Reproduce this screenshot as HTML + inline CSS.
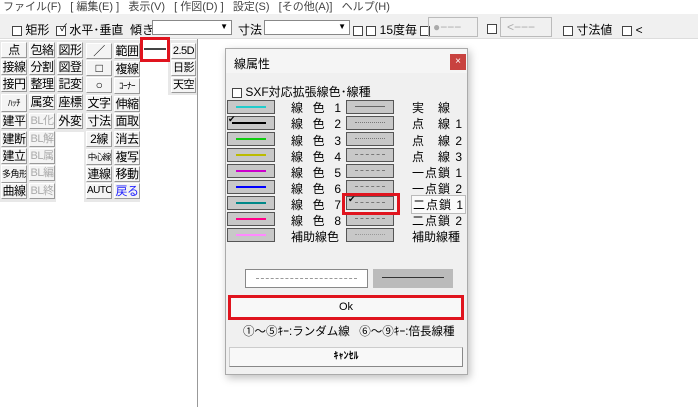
<!DOCTYPE html>
<html><head><meta charset="utf-8"><style>
*{margin:0;padding:0;box-sizing:border-box}
body{width:698px;height:407px;position:relative;background:#fff;font-family:"Liberation Sans","Noto Sans CJK JP",sans-serif;font-size:12px;color:#000;overflow:hidden}
.a{position:absolute;white-space:nowrap}
.menu{left:0;top:0;width:698px;height:14px;background:#fff;font-size:11px;color:#444;line-height:14px}
.tb{left:0;top:14px;width:698px;height:25px;background:#f0f0f0;border-bottom:1px solid #ddd}
.cb{display:inline-block;width:10px;height:10px;border:1px solid #444;background:#fff;vertical-align:middle}
.col{position:absolute;background:#e8e8e8}
.b{position:absolute;height:16px;background:#f4f4f4;border:1px solid #fff;border-right-color:#999;border-bottom-color:#999;font-size:12px;line-height:14px;text-align:center;white-space:nowrap;overflow:hidden;letter-spacing:-0.5px}
.g{color:#aaa;font-size:11px}
.dlg{left:225px;top:48px;width:243px;height:327px;background:#f0f0f0;border:1px solid #aaa;box-shadow:2px 3px 8px rgba(0,0,0,.25)}
.lb{position:absolute;width:48px;height:14px;background:#c8c8c8;border:1.5px solid #555}
.ln{position:absolute;left:8px;right:8px;top:5px;height:2px}
.lab{position:absolute;font-size:12px;letter-spacing:1px}
</style></head><body>
<div class="a menu">&nbsp;ファイル(F)&nbsp;&nbsp;&nbsp;[ 編集(E) ]&nbsp;&nbsp;&nbsp;表示(V)&nbsp;&nbsp;&nbsp;[ 作図(D) ]&nbsp;&nbsp;&nbsp;設定(S)&nbsp;&nbsp;&nbsp;[その他(A)]&nbsp;&nbsp;&nbsp;ヘルプ(H)</div>
<div class="a tb"></div>
<div class="a" style="left:12px;top:21px"><span class="cb"></span> 矩形&nbsp; <span class="cb"></span> 水平･垂直&nbsp; 傾き</div>
<div class="a" style="left:60px;top:19px;font-size:10px">✓</div>
<div class="a" style="left:152px;top:20px;width:80px;height:15px;background:#fff;border:1px solid #888"><span style="position:absolute;right:3px;top:1px;font-size:8px">▼</span></div>
<div class="a" style="left:238px;top:21px">寸法</div>
<div class="a" style="left:264px;top:20px;width:86px;height:15px;background:#fff;border:1px solid #888"><span style="position:absolute;right:3px;top:1px;font-size:8px">▼</span></div>
<div class="a" style="left:353px;top:21px"><span class="cb"></span> <span class="cb"></span> 15度毎 <span class="cb"></span></div>
<div class="a" style="left:428px;top:17px;width:50px;height:20px;border:1px solid #bbb;color:#aaa;line-height:18px;padding-left:4px">●−−−</div>
<div class="a" style="left:487px;top:21px"><span class="cb"></span></div>
<div class="a" style="left:500px;top:17px;width:52px;height:20px;border:1px solid #bbb;color:#aaa;line-height:18px;padding-left:6px">&lt;−−−</div>
<div class="a" style="left:563px;top:21px"><span class="cb"></span> 寸法値&nbsp;&nbsp; <span class="cb"></span> &lt;</div>

<div class="col" style="left:0;top:40px;width:56px;height:162px"></div>
<div class="col" style="left:56px;top:40px;width:28px;height:92px"></div>
<div class="col" style="left:84px;top:40px;width:56px;height:162px"></div>
<div class="col" style="left:168px;top:40px;width:29px;height:55px"></div>
<div class="a" style="left:197px;top:39px;width:1px;height:368px;background:#999"></div>

<div class="b" style="left:1px;top:42px;width:26px">点</div>
<div class="b" style="left:1px;top:59px;width:26px">接線</div>
<div class="b" style="left:1px;top:76px;width:26px">接円</div>
<div class="b" style="left:1px;top:94px;width:26px;height:18px;font-size:9px;line-height:16px">ﾊｯﾁ</div>
<div class="b" style="left:1px;top:113px;width:26px">建平</div>
<div class="b" style="left:1px;top:131px;width:26px">建断</div>
<div class="b" style="left:1px;top:148px;width:26px">建立</div>
<div class="b" style="left:1px;top:165px;width:26px;height:18px;font-size:9px;line-height:16px">多角形</div>
<div class="b" style="left:1px;top:183px;width:26px">曲線</div>
<div class="b" style="left:29px;top:42px;width:26px">包絡</div>
<div class="b" style="left:29px;top:59px;width:26px">分割</div>
<div class="b" style="left:29px;top:76px;width:26px">整理</div>
<div class="b" style="left:29px;top:94px;width:26px">属変</div>
<div class="b g" style="left:29px;top:113px;width:26px">BL化</div>
<div class="b g" style="left:29px;top:131px;width:26px">BL解</div>
<div class="b g" style="left:29px;top:148px;width:26px">BL属</div>
<div class="b g" style="left:29px;top:165px;width:26px">BL編</div>
<div class="b g" style="left:29px;top:183px;width:26px">BL終</div>
<div class="b" style="left:57px;top:42px;width:26px">図形</div>
<div class="b" style="left:57px;top:59px;width:26px">図登</div>
<div class="b" style="left:57px;top:76px;width:26px">記変</div>
<div class="b" style="left:57px;top:94px;width:26px">座標</div>
<div class="b" style="left:57px;top:113px;width:26px">外変</div>
<div class="b" style="left:86px;top:43px;width:26px">／</div>
<div class="b" style="left:86px;top:60px;width:26px">□</div>
<div class="b" style="left:86px;top:77px;width:26px">○</div>
<div class="b" style="left:86px;top:95px;width:26px">文字</div>
<div class="b" style="left:86px;top:113px;width:26px">寸法</div>
<div class="b" style="left:86px;top:131px;width:26px">2線</div>
<div class="b" style="left:86px;top:149px;width:26px;font-size:8.5px;letter-spacing:-1px">中心線</div>
<div class="b" style="left:86px;top:166px;width:26px">連線</div>
<div class="b" style="left:86px;top:183px;width:26px;font-size:10px">AUTO</div>
<div class="b" style="left:114px;top:43px;width:26px">範囲</div>
<div class="b" style="left:114px;top:61px;width:26px">複線</div>
<div class="b" style="left:114px;top:78px;width:26px;font-size:9px">ｺｰﾅｰ</div>
<div class="b" style="left:114px;top:96px;width:26px">伸縮</div>
<div class="b" style="left:114px;top:113px;width:26px">面取</div>
<div class="b" style="left:114px;top:131px;width:26px">消去</div>
<div class="b" style="left:114px;top:149px;width:26px">複写</div>
<div class="b" style="left:114px;top:166px;width:26px">移動</div>
<div class="b" style="left:114px;top:183px;width:26px;color:#22f">戻る</div>
<div class="b" style="left:171px;top:43px;width:25px;font-size:11px">2.5D</div>
<div class="b" style="left:171px;top:60px;width:25px;font-size:11px">日影</div>
<div class="b" style="left:171px;top:77px;width:25px;font-size:11px">天空</div>
<div class="a" style="left:140px;top:37px;width:30px;height:25px;border:3px solid #e0141e;background:#fff"><div style="position:absolute;left:1px;right:1px;top:8px;height:2px;background:#444"></div></div>

<div class="a dlg">
<div class="a" style="left:0;top:0;width:241px;height:24px;background:#f5f5f5"></div>
<div class="a" style="left:8px;top:6px">線属性</div>
<div class="a" style="left:224px;top:5px;width:16px;height:16px;background:#c8423f;color:#fff;font-size:10px;text-align:center;line-height:15px">×</div>
<div class="a" style="left:6px;top:34px"><span class="cb"></span> SXF対応拡張線色･線種</div>

<div class="lb" style="left:1px;top:51px"><div class="ln" style="background:#2cc"></div></div>
<div class="lb" style="left:1px;top:67px"><div class="ln" style="background:#000;left:4px"></div><span style="position:absolute;left:0;top:-3px;font-size:9px">✔</span></div>
<div class="lb" style="left:1px;top:83px"><div class="ln" style="background:#1c1"></div></div>
<div class="lb" style="left:1px;top:99px"><div class="ln" style="background:#bb0"></div></div>
<div class="lb" style="left:1px;top:115px"><div class="ln" style="background:#c0c"></div></div>
<div class="lb" style="left:1px;top:131px"><div class="ln" style="background:#00f"></div></div>
<div class="lb" style="left:1px;top:147px"><div class="ln" style="background:#088"></div></div>
<div class="lb" style="left:1px;top:163px"><div class="ln" style="background:#f08"></div></div>
<div class="lb" style="left:1px;top:179px"><div class="ln" style="background:#f8f"></div></div>

<div class="lab" style="left:65px;top:50px">線&nbsp; 色&nbsp; 1</div>
<div class="lab" style="left:65px;top:66px">線&nbsp; 色&nbsp; 2</div>
<div class="lab" style="left:65px;top:83px">線&nbsp; 色&nbsp; 3</div>
<div class="lab" style="left:65px;top:99px">線&nbsp; 色&nbsp; 4</div>
<div class="lab" style="left:65px;top:115px">線&nbsp; 色&nbsp; 5</div>
<div class="lab" style="left:65px;top:131px">線&nbsp; 色&nbsp; 6</div>
<div class="lab" style="left:65px;top:147px">線&nbsp; 色&nbsp; 7</div>
<div class="lab" style="left:65px;top:163px">線&nbsp; 色&nbsp; 8</div>
<div class="lab" style="left:65px;top:179px;letter-spacing:0">補助線色</div>

<div class="lb" style="left:120px;top:51px"><div class="ln" style="border-top:1px solid #666;height:0"></div></div>
<div class="lb" style="left:120px;top:67px"><div class="ln" style="border-top:1px dotted #777;height:0"></div></div>
<div class="lb" style="left:120px;top:83px"><div class="ln" style="border-top:1px dotted #777;height:0"></div></div>
<div class="lb" style="left:120px;top:99px"><div class="ln" style="border-top:1px dashed #777;height:0"></div></div>
<div class="lb" style="left:120px;top:115px"><div class="ln" style="border-top:1px dashed #777;height:0"></div></div>
<div class="lb" style="left:120px;top:131px"><div class="ln" style="border-top:1px dashed #777;height:0"></div></div>
<div class="lb" style="left:120px;top:147px"><div class="ln" style="border-top:1px dashed #777;height:0"></div><span style="position:absolute;left:1px;top:-3px;font-size:9px">✔</span></div>
<div class="lb" style="left:120px;top:163px"><div class="ln" style="border-top:1px dashed #777;height:0"></div></div>
<div class="lb" style="left:120px;top:179px"><div class="ln" style="border-top:1px dotted #999;height:0"></div></div>
<div class="a" style="left:116px;top:144px;width:58px;height:22px;border:3px solid #e0141e"></div>

<div class="lab" style="left:186px;top:50px">実&nbsp;&nbsp; 線</div>
<div class="lab" style="left:186px;top:66px">点&nbsp;&nbsp; 線 1</div>
<div class="lab" style="left:186px;top:83px">点&nbsp;&nbsp; 線 2</div>
<div class="lab" style="left:186px;top:99px">点&nbsp;&nbsp; 線 3</div>
<div class="lab" style="left:186px;top:115px">一点鎖 1</div>
<div class="lab" style="left:186px;top:131px">一点鎖 2</div>
<div class="lab" style="left:185px;top:146px;border:1px solid #bbb;background:#fafafa;padding:0 1px">二点鎖 1</div>
<div class="lab" style="left:186px;top:163px">二点鎖 2</div>
<div class="lab" style="left:186px;top:179px;letter-spacing:0">補助線種</div>

<div class="a" style="left:19px;top:220px;width:123px;height:19px;background:#fff;border:1px solid #888"><div style="position:absolute;left:10px;right:10px;top:8px;border-top:1px dashed #999"></div></div>
<div class="a" style="left:147px;top:220px;width:80px;height:19px;background:#bbb"><div style="position:absolute;left:9px;right:9px;top:8px;border-top:1px solid #333"></div></div>
<div class="a" style="left:2px;top:246px;width:236px;height:25px;border:3px solid #e0141e;background:#f8f8f8;text-align:center;line-height:19px;font-size:11px">Ok</div>
<div class="a" style="left:17px;top:274px;font-size:11.5px">①～⑤ｷｰ:ランダム線&nbsp;&nbsp; ⑥～⑨ｷｰ:倍長線種</div>
<div class="a" style="left:3px;top:298px;width:234px;height:20px;background:#f8f8f8;border:1px solid #ccc;border-right-color:#888;border-bottom-color:#888;text-align:center;line-height:18px;font-size:10px;font-weight:bold">ｷｬﾝｾﾙ</div>
</div>
</body></html>
